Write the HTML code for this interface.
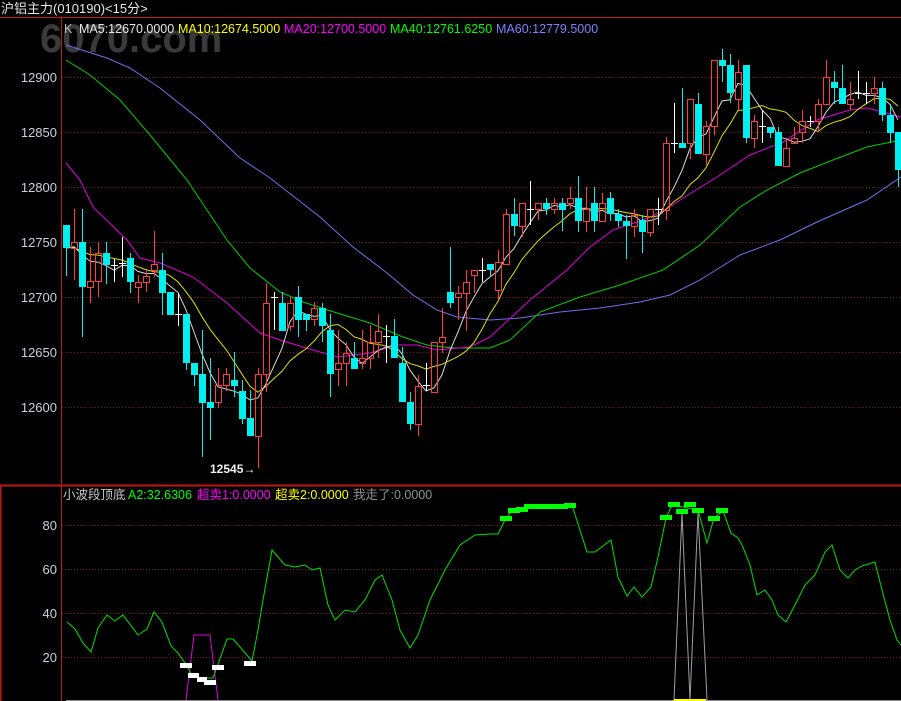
<!DOCTYPE html>
<html><head><meta charset="utf-8">
<style>
html,body{margin:0;padding:0;background:#000;width:901px;height:701px;overflow:hidden}
svg{display:block}
text{font-family:"Liberation Sans","Noto Sans CJK SC",sans-serif}
</style></head>
<body>
<svg id="s" width="901" height="701" viewBox="0 0 901 701" xmlns="http://www.w3.org/2000/svg">
<rect width="901" height="701" fill="#000"/>
<text x="40" y="52" font-size="40" font-weight="bold" fill="#3a3a3a">6070.com</text>
<!-- frame -->
<line x1="0" y1="17.5" x2="901" y2="17.5" stroke="#c01818"/>
<line x1="61.5" y1="17" x2="61.5" y2="485" stroke="#c01818"/>
<rect x="0.5" y="485.5" width="902" height="220" fill="none" stroke="#c01818" stroke-width="1"/>
<line x1="0" y1="485.5" x2="901" y2="485.5" stroke="#c01818" stroke-width="2"/>
<line x1="61.5" y1="485" x2="61.5" y2="701" stroke="#c01818"/>
<line x1="0.5" y1="485" x2="0.5" y2="701" stroke="#c01818" stroke-width="2"/>
<!-- grid -->
<g stroke="#7a1a1a" stroke-dasharray="1,2">
<line x1="62" y1="77.5" x2="901" y2="77.5"/><line x1="62" y1="132.5" x2="901" y2="132.5"/>
<line x1="62" y1="187.5" x2="901" y2="187.5"/><line x1="62" y1="242.5" x2="901" y2="242.5"/>
<line x1="62" y1="297.5" x2="901" y2="297.5"/><line x1="62" y1="352.5" x2="901" y2="352.5"/>
<line x1="62" y1="407.5" x2="901" y2="407.5"/>
<line x1="62" y1="525.5" x2="901" y2="525.5"/><line x1="62" y1="569.5" x2="901" y2="569.5"/>
<line x1="62" y1="613.5" x2="901" y2="613.5"/><line x1="62" y1="657.5" x2="901" y2="657.5"/>
</g>
<g font-size="13" fill="#c8d0e0" text-anchor="end">
<text x="57" y="82">12900</text><text x="57" y="137">12850</text><text x="57" y="192">12800</text>
<text x="57" y="247">12750</text><text x="57" y="302">12700</text><text x="57" y="357">12650</text>
<text x="57" y="412">12600</text>
<text x="57" y="530">80</text><text x="57" y="574">60</text><text x="57" y="618">40</text><text x="57" y="662">20</text>
</g>
<text x="1" y="13" font-size="13" fill="#e8e8e8">沪铝主力(010190)&lt;15分&gt;</text>
<g font-size="12.5">
<text x="64" y="33" fill="#c0c0c0">K</text>
<text x="79" y="33" fill="#e8e8e8">MA5:12670.0000</text>
<text x="178" y="33" fill="#ffff00">MA10:12674.5000</text>
<text x="284" y="33" fill="#ff00ff">MA20:12700.5000</text>
<text x="390" y="33" fill="#00ff00">MA40:12761.6250</text>
<text x="496" y="33" fill="#8080ff">MA60:12779.5000</text>
</g>
<g font-size="12.5">
<text x="63" y="499" fill="#c8c8c8">小波段顶底</text>
<text x="128" y="499" fill="#00ff00">A2:32.6306</text>
<text x="197" y="499" fill="#ff00ff">超卖1:0.0000</text>
<text x="275" y="499" fill="#ffff00">超卖2:0.0000</text>
<text x="353" y="499" fill="#909090">我走了:0.0000</text>
</g>
<text x="210" y="473" font-size="12" font-weight="bold" fill="#f0f0f0">12545→</text>
<g id="ma" fill="none" stroke-width="1"></g>
<g id="cd" shape-rendering="crispEdges"></g>
<!-- lower panel -->
<line x1="66" y1="700.5" x2="901" y2="700.5" stroke="#909090"/>
<polyline fill="none" stroke="#a0a0a0" points="674,700 682,513 690,700 698,513 707,700"/>
<line x1="674" y1="700" x2="706" y2="700" stroke="#ffff00" stroke-width="2"/>
<polyline fill="none" stroke="#e000e0" points="186,700 194,635 210,635 218,700"/>
<polyline fill="none" stroke="#00e000" points="67,622 75,629 83,643 91,652 98,628 107,615 115,621 123,615 138,635 147,629 154,612 162,622 171,646 178,653 185,663 192,675 200,678 213,678 227,639 233,639 252,661 258,630 263,600 272,550 285,565 295,567 305,565 312,570 320,568 328,605 335,620 345,610 355,612 365,600 375,580 382,575 392,600 400,630 410,648 418,635 430,600 445,570 460,545 475,535 490,534 498,534 506,518 512,511 520,508 530,506 572,505 587,552 595,552 611,540 618,577 627,596 634,587 642,597 651,587 658,557 666,518 672,505 683,507 698,510 707,543 714,518 723,511 731,533 738,538 742,545 750,565 757,595 765,590 772,600 778,615 786,622 795,605 805,585 815,575 825,552 832,545 840,570 848,578 855,570 862,566 875,562 882,590 890,620 897,640 901,645"/>
<g fill="#fff" shape-rendering="crispEdges">
<rect x="180" y="663" width="12" height="5"/><rect x="188" y="673" width="11" height="5"/>
<rect x="197" y="677" width="10" height="5"/><rect x="204" y="680" width="12" height="5"/>
<rect x="212" y="665" width="12" height="5"/><rect x="244" y="661" width="12" height="5"/>
</g>
<g fill="#00ff00" shape-rendering="crispEdges">
<rect x="500" y="516" width="12" height="5"/><rect x="508" y="508" width="12" height="5"/>
<rect x="516" y="507" width="12" height="5"/><rect x="524" y="504" width="44" height="5"/>
<rect x="564" y="503" width="12" height="5"/><rect x="660" y="515" width="12" height="5"/>
<rect x="668" y="502" width="12" height="5"/><rect x="676" y="509" width="12" height="5"/>
<rect x="684" y="502" width="12" height="5"/><rect x="692" y="508" width="12" height="5"/>
<rect x="708" y="516" width="12" height="5"/><rect x="716" y="508" width="12" height="5"/>
</g>
</svg>
<script>
var D="d 225 248 225 276|u 242 248 209 280|d 242 287 209 337|u 281 287 247 303|u 253 281 242 297|d 253 265 242 284|w 265 265 259 282|w 263 263 237 277|d 258 282 253 293|u 282 287 275 303|u 276 282 270 292|u 264 270 231 277|d 270 293 253 315|d 292 315 292 315|w 314 314 293 326|d 314 363 314 370|d 363 375 363 386|d 374 403 330 457|d 402 408 358 440|u 385 402 368 408|u 374 385 368 391|d 380 386 352 397|d 391 419 380 424|d 418 436 390 436|u 374 436 368 468|u 303 374 283 392|w 297 297 292 330|d 303 331 292 331|u 303 326 297 331|d 297 320 286 337|d 314 320 314 331|u 308 319 302 326|d 308 326 303 342|d 330 374 314 397|u 363 369 330 386|u 353 363 342 386|d 358 369 342 369|u 358 363 330 369|u 342 358 325 369|u 331 342 314 358|w 336 336 325 363|d 336 358 319 358|d 363 402 347 402|d 402 424 392 430|u 386 424 375 436|w 385 385 363 391|u 342 392 342 392|u 337 342 308 353|d 292 303 247 308|u 293 297 286 320|u 282 293 270 331|u 270 275 270 293|w 270 270 258 282|d 264 270 264 276|u 262 290 250 300|u 214 264 209 264|d 214 226 198 236|u 203 226 203 237|w 209 209 181 225|u 203 209 203 220|d 203 209 198 215|u 203 209 198 214|d 203 210 198 231|u 198 203 187 209|d 198 221 176 232|u 209 221 187 232|d 203 221 187 232|u 203 221 193 221|d 198 214 192 221|d 214 221 209 227|d 221 226 215 259|u 215 226 209 237|d 220 232 215 253|u 209 232 209 237|w 209 209 198 225|u 143 210 137 220|w 143 143 103 153|d 143 148 88 148|u 99 143 99 159|d 104 154 93 154|u 126 154 121 165|u 60 126 60 135|d 60 66 49 82|d 65 93 54 103|u 72 99 60 110|d 65 138 65 143|u 121 138 115 148|w 126 126 110 143|d 127 133 127 138|d 132 166 127 166|u 148 166 138 166|u 138 143 127 143|u 121 132 110 143|w 121 121 116 127|u 104 121 99 132|u 77 104 60 104|d 82 88 71 104|d 88 104 65 104|u 99 104 82 110|w 93 93 71 99|w 93 93 82 104|u 88 93 77 104|d 88 115 82 121|d 115 133 104 143|d 132 170 132 187";
var NS="http://www.w3.org/2000/svg",cd=document.getElementById("cd"),ma=document.getElementById("ma");
function el(t,a,p){var e=document.createElementNS(NS,t);for(var k in a)e.setAttribute(k,a[k]);p.appendChild(e);return e;}
var closes=[];
D.split("|").forEach(function(s,i){var p=s.split(" "),t=p[0],a=+p[1],b=+p[2],h=+p[3],l=+p[4],x=66+8*i;
 if(t=="u"){closes.push(a);
  if(h<a)el("line",{x1:x+.5,y1:h,x2:x+.5,y2:a,stroke:"#ff3c3c"},cd);
  if(l>b)el("line",{x1:x+.5,y1:b,x2:x+.5,y2:l,stroke:"#ff3c3c"},cd);
  el("rect",{x:x-2.5,y:a+.5,width:6,height:Math.max(b-a,1),fill:"none",stroke:"#ff3c3c"},cd);
 }else if(t=="d"){closes.push(b);
  el("line",{x1:x+.5,y1:h,x2:x+.5,y2:l,stroke:"#00f0f0"},cd);
  el("rect",{x:x-3,y:a,width:7,height:Math.max(b-a,1),fill:"#00f0f0"},cd);
 }else{closes.push(a);
  el("line",{x1:x+.5,y1:h,x2:x+.5,y2:l,stroke:"#fff"},cd);
  el("line",{x1:x-3,y1:a+.5,x2:x+4,y2:a+.5,stroke:"#fff"},cd);}
});
function mav(n){var pts=[];for(var i=0;i<closes.length;i++){var s=0;for(var j=0;j<n;j++){s+=closes[Math.max(0,i-j)];}pts.push((66+8*i)+","+(s/n).toFixed(1));}return pts.join(" ");}
el("polyline",{points:"66,45 107,58 130,68 160,88 200,120 240,158 270,178 320,217 353,247 387,273 413,295 437,310 457,317 490,320 520,318 560,312 600,308 640,302 670,295 700,280 740,255 780,240 817,222 867,200 901,177",stroke:"#7070f0"},ma);
el("polyline",{points:"66,60 90,75 120,100 150,135 187,180 227,240 250,268 280,292 303,302 337,313 370,323 403,337 427,345 453,348 490,348 510,340 540,312 580,297 620,285 663,270 700,245 740,207 767,190 800,173 833,160 867,147 901,140",stroke:"#00d000"},ma);
el("polyline",{points:"66,163 80,180 93,207 127,240 140,258 160,263 193,277 227,303 260,333 280,340 303,347 337,357 370,353 397,345 417,345 437,350 470,347 490,337 530,300 567,270 590,247 613,230 637,222 650,217 667,209 683,198 717,177 750,155 783,142 817,120 850,110 867,108 883,112 901,117",stroke:"#e000e0"},ma);
el("polyline",{points:mav(10),stroke:"#e0e000"},ma);
el("polyline",{points:mav(5),stroke:"#d8d8d8"},ma);
</script>
</body></html>
